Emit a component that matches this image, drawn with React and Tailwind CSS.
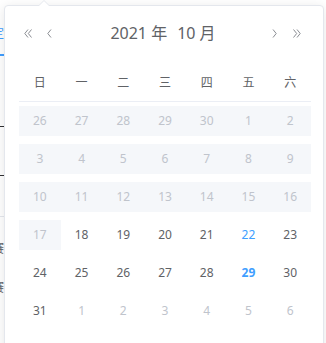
import React from 'react';

const weekDays = ['日', '一', '二', '三', '四', '五', '六'];

// each cell: [day, kind]  kind: d = disabled, n = normal, t = today-ish, s = bold blue, x = next month
const rows = [
  [[26, 'd'], [27, 'd'], [28, 'd'], [29, 'd'], [30, 'd'], [1, 'd'], [2, 'd']],
  [[3, 'd'], [4, 'd'], [5, 'd'], [6, 'd'], [7, 'd'], [8, 'd'], [9, 'd']],
  [[10, 'd'], [11, 'd'], [12, 'd'], [13, 'd'], [14, 'd'], [15, 'd'], [16, 'd']],
  [[17, 'd'], [18, 'n'], [19, 'n'], [20, 'n'], [21, 'n'], [22, 't'], [23, 'n']],
  [[24, 'n'], [25, 'n'], [26, 'n'], [27, 'n'], [28, 'n'], [29, 's'], [30, 'n']],
  [[31, 'n'], [1, 'x'], [2, 'x'], [3, 'x'], [4, 'x'], [5, 'x'], [6, 'x']],
];

const cellText = {
  d: 'text-[#c0c4cc]',
  n: 'text-[#606266]',
  t: 'text-[#409eff]',
  s: 'text-[#409eff] font-bold',
  x: 'text-[#c0c4cc]',
};

function DoubleLeft() {
  return (
    <svg width="8" height="9" viewBox="0 0 8 9" fill="none" stroke="#8a8d93" strokeWidth="1">
      <path d="M4 0.5 L0.8 4.5 L4 8.5" />
      <path d="M7.5 0.5 L4.3 4.5 L7.5 8.5" />
    </svg>
  );
}

function SingleLeft() {
  return (
    <svg width="5" height="9" viewBox="0 0 5 9" fill="none" stroke="#8a8d93" strokeWidth="1">
      <path d="M4 0.5 L0.8 4.5 L4 8.5" />
    </svg>
  );
}

export default function App() {
  return (
    <div
      className="relative w-[326px] h-[343px] overflow-hidden bg-white"
      style={{ fontFamily: '"Noto Sans", "Noto Sans CJK SC", sans-serif' }}
    >
      {/* page behind the popup, only its edge shows */}
      <div className="w-[4px] h-full overflow-hidden">
        <div className="w-[40px] -ml-[36px] flex flex-col items-end text-[12px] leading-none">
          <div className="mt-[28px] text-[#409eff]">确定</div>
          <div className="mt-[14px] w-full h-[2px] bg-[#409eff]" />
          <div className="mt-[70px] w-full h-px bg-[#303133]" />
          <div className="mt-[48px] w-full h-px bg-[#303133]" />
          <div className="mt-[40px] w-full h-px bg-[#e4e7ed]" />
          <div className="mt-[26px] text-[#606266]">比赛</div>
          <div className="mt-[27px] text-[#606266]">比赛</div>
        </div>
      </div>

      {/* date picker popup */}
      <div className="absolute left-[4px] top-[5px] w-[320px] h-[360px] bg-white border border-[#e4e7ed] rounded-[4px] shadow-[0_2px_12px_0_rgba(0,0,0,0.1)]">
        {/* arrow */}
        <div className="absolute -top-[6px] left-[33px] w-0 h-0 border-x-[6px] border-x-transparent border-b-[6px] border-b-[#e4e7ed]" />
        <div className="absolute -top-[5px] left-[34px] w-0 h-0 border-x-[5px] border-x-transparent border-b-[5px] border-b-white" />

        <div className="mt-[12px] mx-[12px] h-[30px] flex items-center text-[#606266]">
          <div className="flex items-center gap-[15px] pl-[7px]">
            <DoubleLeft />
            <SingleLeft />
          </div>
          <div className="flex-1 flex justify-center text-[16px] pl-[2px]">
            <span className="px-[5px]">2021 年</span>
            <span className="px-[5px]">10 月</span>
          </div>
          <div className="flex items-center gap-[16px] pr-[10px]">
            <span className="-scale-x-100 flex"><SingleLeft /></span>
            <span className="-scale-x-100 flex"><DoubleLeft /></span>
          </div>
        </div>

        <div className="mt-[15px] ml-[14px] w-[292px] text-[12px]">
          <div className="grid grid-cols-7 h-[39px] border-b border-[#ebeef5] text-[#606266]">
            {weekDays.map((d) => (
              <div key={d} className="flex items-center justify-center pt-[1px]">{d}</div>
            ))}
          </div>
          {rows.map((row, i) => (
            <div key={i} className="grid grid-cols-7">
              {row.map(([day, kind], j) => (
                <div key={j} className="h-[38px] py-[4px]">
                  <div
                    className={`h-[30px] flex items-center justify-center ${cellText[kind]} ${
                      kind === 'd' ? 'bg-[#f5f7fa]' : ''
                    }`}
                  >
                    {day}
                  </div>
                </div>
              ))}
            </div>
          ))}
        </div>
      </div>
    </div>
  );
}
